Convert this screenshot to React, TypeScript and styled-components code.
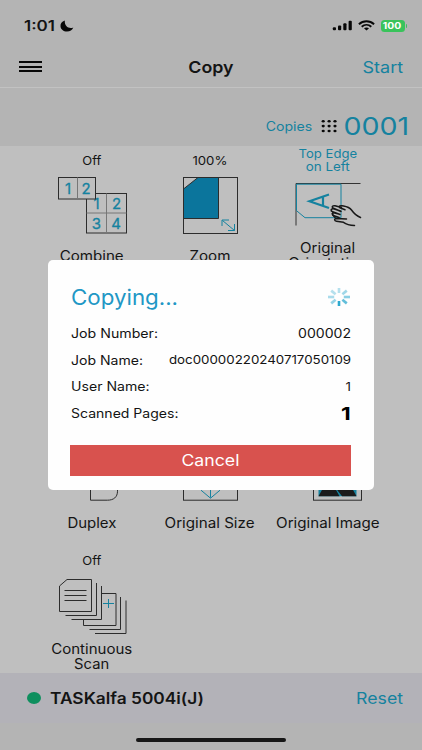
import React from 'react';
import styled, { createGlobalStyle } from 'styled-components';

const blue = '#15829f';
const ink = '#141414';
const tileBg = '#bfbfbf';

const GlobalStyle = createGlobalStyle`
  * { box-sizing: border-box; }
  body { margin: 0; background: #b4b4b4; }
`;

const Screen = styled.main`
  position: relative;
  width: 422px;
  height: 750px;
  overflow: hidden;
  display: flex;
  flex-direction: column;
  background: #b4b4b4;
  color: ${ink};
  font-family: Inter, "Liberation Sans", sans-serif;
`;

type TextProps = {
  $size: number;
  $stretch: number;
  $weight?: number;
  $color?: string;
  $origin?: 'left' | 'center' | 'right';
};

const Text = styled.span<TextProps>`
  display: block;
  white-space: nowrap;
  font-size: ${(p) => p.$size}px;
  font-weight: ${(p) => p.$weight ?? 400};
  color: ${(p) => p.$color ?? 'inherit'};
  transform: scaleX(${(p) => p.$stretch});
  transform-origin: ${(p) => p.$origin ?? 'center'} center;
`;

const StatusBar = styled.div`
  flex: none;
  height: 49px;
  padding: 2px 15px 0 24px;
  display: flex;
  align-items: center;
  justify-content: space-between;
`;

const Clock = styled.div`
  display: flex;
  align-items: center;
  gap: 10px;
`;

const StatusIcons = styled.div`
  display: flex;
  align-items: center;
  gap: 6px;
`;

const Battery = styled.div`
  width: 24px;
  height: 12px;
  border-radius: 3.5px;
  background: #39c35b;
  color: #fff;
  display: flex;
  align-items: center;
  justify-content: center;
`;

const BatteryGroup = styled.div`
  display: flex;
  align-items: center;
  gap: 1px;
`;

const BatteryTip = styled.div`
  width: 1.5px;
  height: 4px;
  border-radius: 0 2px 2px 0;
  background: #39c35b;
`;

const NavBar = styled.header`
  flex: none;
  height: 39px;
  padding: 0 19px 3px;
  display: grid;
  grid-template-columns: 1fr auto 1fr;
  align-items: center;
  border-bottom: 1px solid #c2c2c2;
`;

const MenuButton = styled.button`
  width: 23px;
  height: 13px;
  padding: 1px 0;
  border: 0;
  background: none;
  display: flex;
  flex-direction: column;
  justify-content: space-between;
`;

const MenuLine = styled.span`
  height: 2px;
  background: #080808;
`;

const NavAction = styled.div`
  justify-self: end;
`;

const CopiesBar = styled.div`
  flex: none;
  height: 58px;
  padding: 18px 13px 0 0;
  display: flex;
  align-items: center;
  justify-content: flex-end;
`;

const CopiesLabel = styled.div`
  margin-right: 9px;
`;

const CopiesCount = styled.div`
  width: 65px;
  margin-left: 7px;
  display: flex;
  justify-content: flex-end;
`;

const Options = styled.section`
  flex: none;
  height: 527px;
  padding: 0 35px 0 33px;
  background: ${tileBg};
  display: grid;
  grid-template-columns: repeat(3, 118px);
  grid-template-rows: repeat(4, 133.67px);
  overflow: hidden;
`;

const Tile = styled.div`
  display: flex;
  flex-direction: column;
  align-items: center;
  min-width: 0;
`;

const TileValue = styled.div`
  height: 28px;
  display: flex;
  flex-direction: column;
  align-items: center;
  justify-content: center;
  line-height: 13px;
`;

const TileIcon = styled.svg`
  flex: none;
  width: 118px;
  height: 66px;
  fill: none;
  stroke: #2c2c2c;
  stroke-width: 1;
`;

const TileLabel = styled.div`
  height: 30px;
  display: flex;
  flex-direction: column;
  align-items: center;
  justify-content: center;
  line-height: 15px;
`;

const DeviceBar = styled.footer`
  flex: none;
  height: 50px;
  padding: 0 19px 0 27px;
  background: #b3b2b8;
  display: flex;
  align-items: center;
`;

const StatusDot = styled.span`
  width: 14px;
  height: 12px;
  border-radius: 50%;
  background: #0e8f5e;
  margin-right: 9px;
`;

const DeviceAction = styled.div`
  margin-left: auto;
`;

const HomeArea = styled.div`
  flex: 1;
  padding-top: 14.5px;
  display: flex;
  justify-content: center;
  align-items: flex-start;
`;

const HomeIndicator = styled.div`
  width: 150px;
  height: 4.5px;
  border-radius: 3px;
  background: #171717;
`;

const Dialog = styled.div`
  position: absolute;
  left: 48px;
  top: 260px;
  width: 326px;
  height: 230px;
  padding: 22px 23px 0 22.5px;
  border-radius: 5px;
  background: #fefefe;
`;

const DialogHead = styled.div`
  height: 30px;
  display: flex;
  align-items: center;
  justify-content: space-between;
`;

const Spinner = styled.svg`
  width: 24px;
  height: 20px;
  stroke: #2da9cf;
  stroke-width: 2.6;
`;

const JobRows = styled.div`
  margin-top: 8px;
  display: grid;
  grid-auto-rows: 26.7px;
`;

const JobRow = styled.div`
  display: flex;
  align-items: center;
  justify-content: space-between;
`;

const CancelButton = styled.button`
  width: 281px;
  height: 31.5px;
  margin: 18.2px 0 0 -0.5px;
  padding: 0;
  border: 0;
  background: #d8524e;
  color: #fff;
  font-family: inherit;
  display: flex;
  align-items: center;
  justify-content: center;
`;

const Digit = styled.text`
  fill: ${blue};
  stroke: ${blue};
  stroke-width: 0.3;
  font-size: 15px;
  text-anchor: middle;
`;

const CombineIcon = () => (
  <TileIcon viewBox="33 174 118 66">
    <rect x="86.5" y="193.5" width="40" height="39.5" />
    <path d="M106.5 193.5v39.5M86.5 213h40" stroke="#777" />
    <Digit x="96.5" y="208.5">1</Digit>
    <Digit x="116.5" y="208.5">2</Digit>
    <Digit x="96.5" y="228.5">3</Digit>
    <Digit x="116" y="228.5">4</Digit>
    <rect x="58.5" y="177.5" width="37" height="21.5" fill={tileBg} />
    <path d="M77.5 177.5v21.5" stroke="#777" />
    <Digit x="68" y="193.5">1</Digit>
    <Digit x="86.2" y="193.5">2</Digit>
  </TileIcon>
);

const ZoomIcon = () => (
  <TileIcon viewBox="151 174 118 66">
    <rect x="183.5" y="177.5" width="54" height="56" />
    <path d="M183.5 218.5v-29.5l14.5-11.5h20.5v41z" fill="#0b759c" />
    <path d="M222.5 220.5l12 10M222 226v-6h7M228 230.5h6.5v-6.5" stroke={blue} />
  </TileIcon>
);

const OrientationIcon = () => (
  <TileIcon viewBox="269.5 174 118 66">
    <path d="M296.5 225.5v-42h64.5" stroke="#333" />
    <path d="M297 184.2h44.5v33.5h-36l-8.500-7z" stroke={blue} />
    <path d="M329.500 194.500l-19.500 6.700 19.500 6.800M323.500 196.800v9" stroke={blue} strokeWidth="2.2" />
    <path
      d="M361 217.500c-4-1.500-6.500-4-9-7.500c-2.500-3.500-5-3.500-9.500-4.300c-3-.4-4 1.500-1.500 2.300l4.500 1.700M342 207.500l-6.500-1.700c-3.500-.5-3.500 2-1 2.700l7 3M341 211l-7-2.200c-3-.4-3.200 2.200-.8 3l7.300 2.700M340 214.300l-5.500-1.500c-2.500 0-2.200 2.200 0 3l5 1.700"
      fill={tileBg}
      stroke="#181818"
      strokeWidth="1.5"
      strokeLinecap="round"
      strokeLinejoin="round"
    />
    <path
      d="M333 213.500c.2 2 1.200 3 2.500 4M347 219l-10-.5c-3 .3-2 2.500 0 2.800l7 1c3.500 2.500 7 3 11 3.200"
      stroke="#181818"
      strokeWidth="1.5"
      strokeLinecap="round"
      strokeLinejoin="round"
    />
  </TileIcon>
);

const DuplexIcon = () => (
  <TileIcon viewBox="33 441.3 118 66">
    <path d="M90.500 455v45.500h17c6 0 10-3 10-9v-36.500z" />
  </TileIcon>
);

const OriginalSizeIcon = () => (
  <TileIcon viewBox="151 441.3 118 66">
    <rect x="183.500" y="444.500" width="54" height="56" />
    <path d="M210.500 450v48M201 490.500l9.500 8 9.500-8" stroke={blue} />
  </TileIcon>
);

const OriginalImageIcon = () => (
  <TileIcon viewBox="269 441.3 118 66">
    <rect x="313.500" y="444.500" width="48" height="56" />
    <path d="M318.500 450h38v46.500h-38z" fill={blue} stroke="none" />
    <path d="M318.500 496.500l5.500-10h10l5.500 10zM342 496.500l-6.500-8.500 4-6h9l8 14.500z" fill="#1b1b1b" stroke="none" />
  </TileIcon>
);

const ContinuousIcon = () => (
  <TileIcon viewBox="33 575 118 66">
    <path d="M101.500 593.500h14.500v32h-32.500v-6" />
    <path d="M89.500 629.500h31v-32.500M95 633.500h31v-33" />
    <path d="M59.500 611.500v-25.500l7.500-6.500h24.500v32zM65.500 615.500h31v-32.500M71.500 619.500h30v-33.500" />
    <path d="M64.500 590.500h22M64.500 595.500h22M64.500 600.500h22" />
    <path d="M103 603.500h11M108.500 599v9" stroke={blue} />
  </TileIcon>
);

type Line = [text: string, stretch: number];
type Option = { value?: Line[]; accent?: boolean; label: Line[]; icon: React.ReactNode };

const options: Option[] = [
  { value: [['Off', 1.08]], label: [['Combine', 1.08]], icon: <CombineIcon /> },
  { value: [['100%', 1.1]], label: [['Zoom', 1.083]], icon: <ZoomIcon /> },
  {
    value: [['Top Edge', 1.091], ['on Left', 1.117]],
    accent: true,
    label: [['Original', 1.077], ['Orientation', 1.077]],
    icon: <OrientationIcon />,
  },
  { label: [], icon: null },
  { label: [], icon: null },
  { label: [], icon: null },
  { label: [['Duplex', 1.069]], icon: <DuplexIcon /> },
  { label: [['Original Size', 1.083]], icon: <OriginalSizeIcon /> },
  { label: [['Original Image', 1.082]], icon: <OriginalImageIcon /> },
  { value: [['Off', 1.08]], label: [['Continuous', 1.073], ['Scan', 1.053]], icon: <ContinuousIcon /> },
];

const jobs: { name: Line; value: Line; size: number; weight?: number }[] = [
  { name: ['Job Number:', 1.133], value: ['000002', 1.126], size: 12.5 },
  { name: ['Job Name:', 1.124], value: ['doc00000220240717050109', 1.152], size: 11.55 },
  { name: ['User Name:', 1.127], value: ['1', 1.12], size: 12 },
  { name: ['Scanned Pages:', 1.123], value: ['1', 1.25], size: 18, weight: 700 },
];

const spokes = [0.35, 0.45, 0.55, 0.75, 1, 0.5, 0.4, 0.35];
const dots = [0, 1, 2];

export default function App() {
  return (
    <Screen>
      <GlobalStyle />
      <StatusBar>
        <Clock>
          <Text $size={14} $stretch={1.214} $weight={600} $origin="left">1:01</Text>
          <svg width="14" height="12" viewBox="0 0 14 12">
            <path d="M4.800 0.500C1.800 1.500 0.300 3.600 0.500 6.200C0.700 9.400 3.500 11.500 7 11.500C10 11.500 12.300 10 13.300 7.500C9 9.200 4.400 6.500 4.800 0.500Z" fill="#080808" />
          </svg>
        </Clock>
        <StatusIcons>
          <svg width="20" height="11" viewBox="0 0 20 11" fill="#080808">
            <rect x="0.800" y="7.200" width="3.200" height="3" rx="1" />
            <rect x="6" y="5.500" width="3.200" height="4.700" rx="1" />
            <rect x="11.300" y="3.200" width="3.200" height="7" rx="1" />
            <rect x="16.600" y="0.700" width="3.200" height="9.500" rx="1" />
          </svg>
          <svg width="17" height="11" viewBox="0 0 17 11" fill="none" stroke="#080808" strokeWidth="1.900">
            <path d="M0.900 4.200C5.200 0.200 11.800 0.200 16.100 4.200M3.700 6.700C6.500 4.200 10.500 4.200 13.300 6.700" />
            <path d="M8.500 10.400L6 8.300C7.400 7.200 9.600 7.200 11 8.300Z" fill="#080808" stroke="none" />
          </svg>
          <BatteryGroup>
            <Battery>
              <Text $size={9} $stretch={1.15} $weight={700}>100</Text>
            </Battery>
            <BatteryTip />
          </BatteryGroup>
        </StatusIcons>
      </StatusBar>
      <NavBar>
        <MenuButton aria-label="Menu">
          {dots.map((d) => <MenuLine key={d} />)}
        </MenuButton>
        <Text $size={16.5} $stretch={1.08} $weight={600}>Copy</Text>
        <NavAction>
          <Text $size={16} $stretch={1.123} $color={blue} $origin="right">Start</Text>
        </NavAction>
      </NavBar>
      <CopiesBar>
        <CopiesLabel>
          <Text $size={12.5} $stretch={1.13} $color={blue} $origin="right">Copies</Text>
        </CopiesLabel>
        <svg width="16" height="14" viewBox="0 0 16 14" fill="#080808">
          {dots.map((r) => dots.map((c) => (
            <ellipse key={`${r}${c}`} cx={2.2 + c * 5.9} cy={2.2 + r * 4.9} rx="1.600" ry="1.300" />
          )))}
        </svg>
        <CopiesCount>
          <Text $size={24} $stretch={1.19} $color={blue} $origin="right">0001</Text>
        </CopiesCount>
      </CopiesBar>
      <Options>
        {options.map((o, i) => (
          <Tile key={i}>
            <TileValue>
              {o.value?.map(([t, s]) => (
                <Text key={t} $size={12} $stretch={s} $color={o.accent ? blue : undefined}>{t}</Text>
              ))}
            </TileValue>
            {o.icon}
            <TileLabel>
              {o.label.map(([t, s]) => <Text key={t} $size={14} $stretch={s}>{t}</Text>)}
            </TileLabel>
          </Tile>
        ))}
      </Options>
      <DeviceBar>
        <StatusDot />
        <Text $size={15.5} $stretch={1.118} $weight={600} $origin="left">TASKalfa 5004i(J)</Text>
        <DeviceAction>
          <Text $size={15.5} $stretch={1.144} $color={blue} $origin="right">Reset</Text>
        </DeviceAction>
      </DeviceBar>
      <HomeArea><HomeIndicator /></HomeArea>
      <Dialog role="dialog">
        <DialogHead>
          <Text $size={21} $stretch={1.063} $color="#2197c5" $origin="left">Copying...</Text>
          <Spinner viewBox="-12 -10 24 20">
            {spokes.map((opacity, i) => {
              const a = (i * Math.PI) / 4;
              const x = Math.sin(a);
              const y = -Math.cos(a);
              return <line key={i} x1={x * 4.8} y1={y * 4} x2={x * 11} y2={y * 9} opacity={opacity} />;
            })}
          </Spinner>
        </DialogHead>
        <JobRows>
          {jobs.map((j) => (
            <JobRow key={j.name[0]}>
              <Text $size={12.5} $stretch={j.name[1]} $origin="left">{j.name[0]}</Text>
              <Text $size={j.size} $stretch={j.value[1]} $weight={j.weight} $color={j.weight ? '#000' : undefined} $origin="right">{j.value[0]}</Text>
            </JobRow>
          ))}
        </JobRows>
        <CancelButton>
          <Text $size={15.5} $stretch={1.141}>Cancel</Text>
        </CancelButton>
      </Dialog>
    </Screen>
  );
}
